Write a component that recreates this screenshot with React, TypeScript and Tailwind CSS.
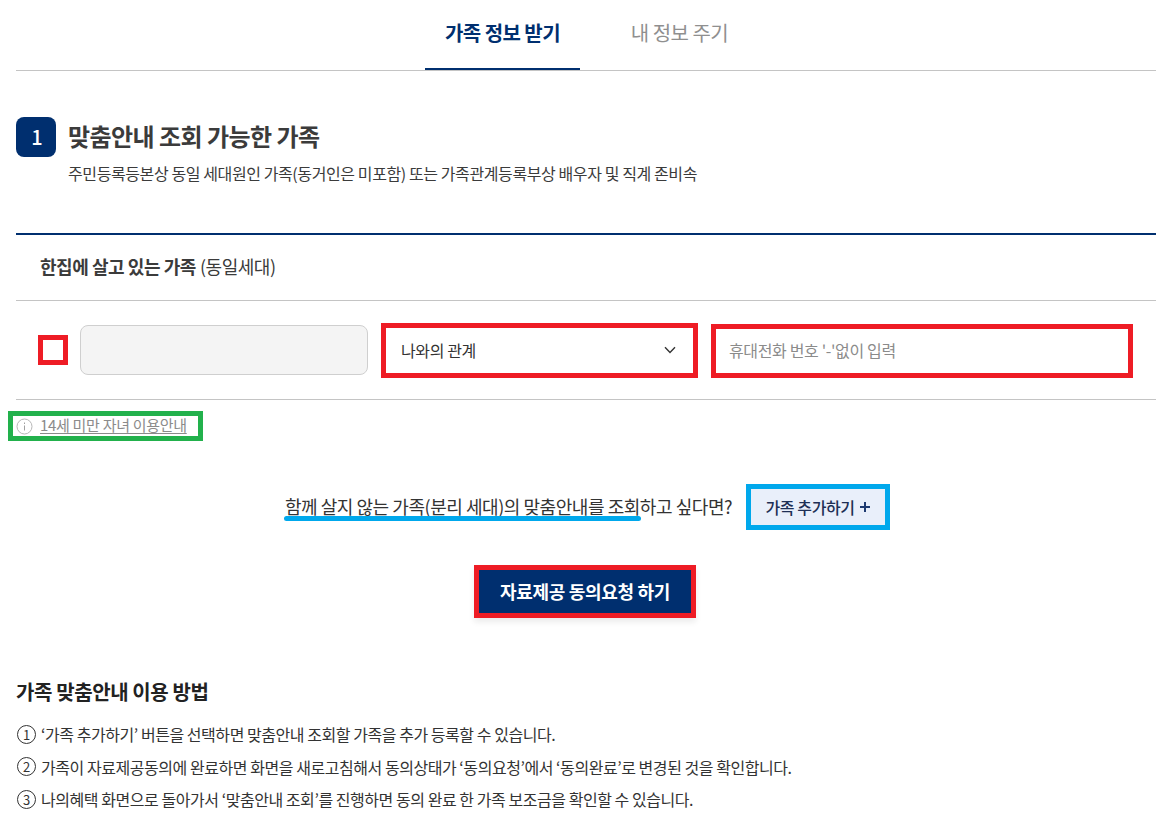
import React from "react";

const font = { fontFamily: '"Noto Sans CJK KR", "Noto Sans", sans-serif' };

function Num({ n }: { n: string }) {
  return (
    <span className="mr-[5px] flex h-[19px] w-[19px] shrink-0 items-center justify-center rounded-full border border-[#333] text-[13px] leading-none text-[#333]">
      {n}
    </span>
  );
}

export default function App() {
  return (
    <div className="h-[825px] w-[1172px] overflow-hidden bg-white px-4" style={font}>
      <div className="flex h-[71px] justify-center border-b border-[#c4c4c4] pl-[32px]">
        <div className="flex h-[70px] w-[155px] items-center justify-center border-b-2 border-[#002f6f] pb-[3px] text-[20px] font-bold tracking-[-0.55px] text-[#002f6f]">
          가족 정보 받기
        </div>
        <div className="flex h-[70px] w-[199px] items-center justify-center pb-[5px] text-[20px] tracking-[-0.5px] text-[#8f8f8f]">
          내 정보 주기
        </div>
      </div>

      <div className="mt-[46px] flex gap-3">
        <div className="flex h-[40px] w-[40px] shrink-0 items-center justify-center rounded-[8px] bg-[#002f6f] pl-[2px] text-[20px] font-medium text-white">
          1
        </div>
        <div>
          <div className="text-[24px] font-bold leading-[38px] tracking-[-0.55px] text-[#3b3b3b]">
            맞춤안내 조회 가능한 가족
          </div>
          <div className="mt-[2px] text-[16px] leading-[32px] tracking-[-0.4px] text-[#3b3b3b]">
            주민등록등본상 동일 세대원인 가족(동거인은 미포함) 또는 가족관계등록부상 배우자 및 직계 존비속
          </div>
        </div>
      </div>

      <div className="mt-[44px] flex h-[68px] items-center border-t-2 border-b border-t-[#002f6f] border-b-[#c4c4c4] pb-[2px] pl-[24px] text-[18px] tracking-[-0.45px] text-[#3b3b3b]">
        <b className="font-bold">한집에 살고 있는 가족</b>
        <span className="ml-[4px]">(동일세대)</span>
      </div>

      <div className="flex h-[99px] items-center border-b border-[#c4c4c4] pl-[22px]">
        <div className="h-[30px] w-[30px] border-[5px] border-[#ee1c25] bg-white" />
        <div className="ml-[12px] h-[50px] w-[288px] rounded-[8px] border border-[#cfcfcf] bg-[#f4f4f4]" />
        <div className="ml-[13px] mt-[1px] flex h-[55px] w-[317px] items-center justify-between border-[5px] border-[#ee1c25] pb-[2px] pl-[15px] pr-[17px] text-[16px] tracking-[-0.4px] text-[#333]">
          나와의 관계
          <svg width="12" height="8" viewBox="0 0 12 8" fill="none">
            <path d="M1 1.2 L6 6.4 L11 1.2" stroke="#333" strokeWidth="1.4" />
          </svg>
        </div>
        <div className="ml-[13px] mt-[2px] flex h-[54px] w-[422px] items-center border-[5px] border-[#ee1c25] pb-[2px] pl-[13px] text-[16px] tracking-[-0.35px] text-[#8b8b8b]">
          휴대전화 번호 '-'없이 입력
        </div>
      </div>

      <div className="ml-[-8px] mt-[11px] flex h-[30px] w-[195px] items-center border-[5px] border-[#22b14c] pl-[3px] text-[15px] tracking-[-0.3px] text-[#8b8b8b]">
        <svg width="17" height="17" viewBox="0 0 17 17" fill="none" className="shrink-0">
          <circle cx="8.5" cy="8.5" r="7.5" stroke="#b8b8b8" />
          <path d="M8.5 7.5V12.5M8.5 4.5V6" stroke="#a0a0a0" />
        </svg>
        <span className="mb-[2px] ml-[7px] underline underline-offset-2">14세 미만 자녀 이용안내</span>
      </div>

      <div className="mt-[43px] flex items-center justify-center pl-[3px]">
        <span className="relative mb-[2px] text-[18px] leading-[26px] tracking-[-0.45px] text-[#333]">
          함께 살지 않는 가족(분리 세대)의 맞춤안내를 조회하고 싶다면?
          <span className="absolute left-[-1px] top-[23px] h-[5px] w-[357px] rounded-full bg-[#00a8ec]" />
        </span>
        <div className="ml-[14px] flex h-[46px] w-[144px] items-center justify-center gap-[5px] border-[5px] border-[#00a8ec] bg-[#e9effa] pb-[1px] pr-[1px] text-[16px] font-medium tracking-[-0.4px] text-[#1e2f55]">
          가족 추가하기
          <svg width="10" height="10" viewBox="0 0 10 10" fill="none">
            <path d="M5 0V10M0 5H10" stroke="#1e3a70" strokeWidth="2" />
          </svg>
        </div>
      </div>

      <div className="mt-[35px] flex justify-center pr-[2px]">
        <div className="flex h-[53px] w-[222px] items-center justify-center border-[5px] border-[#ee1c25] bg-[#002f6f] text-[18px] font-bold tracking-[-0.3px] text-white shadow-[0_4px_6px_rgba(0,0,0,0.08)]">
          자료제공 동의요청 하기
        </div>
      </div>

      <div className="mt-[59px] text-[20px] font-bold leading-[30px] tracking-[-0.4px] text-[#222]">
        가족 맞춤안내 이용 방법
      </div>
      <div className="mt-[11px] flex flex-col text-[16px] tracking-[-0.45px] text-[#333]">
        <div className="flex h-[32.5px] items-center pl-[1px]">
          <Num n="1" />‘가족 추가하기’ 버튼을 선택하면 맞춤안내 조회할 가족을 추가 등록할 수 있습니다.
        </div>
        <div className="flex h-[32.5px] items-center pl-[1px]">
          <Num n="2" />가족이 자료제공동의에 완료하면 화면을 새로고침해서 동의상태가 ‘동의요청’에서 ‘동의완료’로 변경된 것을 확인합니다.
        </div>
        <div className="flex h-[32.5px] items-center pl-[1px]">
          <Num n="3" />나의혜택 화면으로 돌아가서 ‘맞춤안내 조회’를 진행하면 동의 완료 한 가족 보조금을 확인할 수 있습니다.
        </div>
      </div>
    </div>
  );
}
